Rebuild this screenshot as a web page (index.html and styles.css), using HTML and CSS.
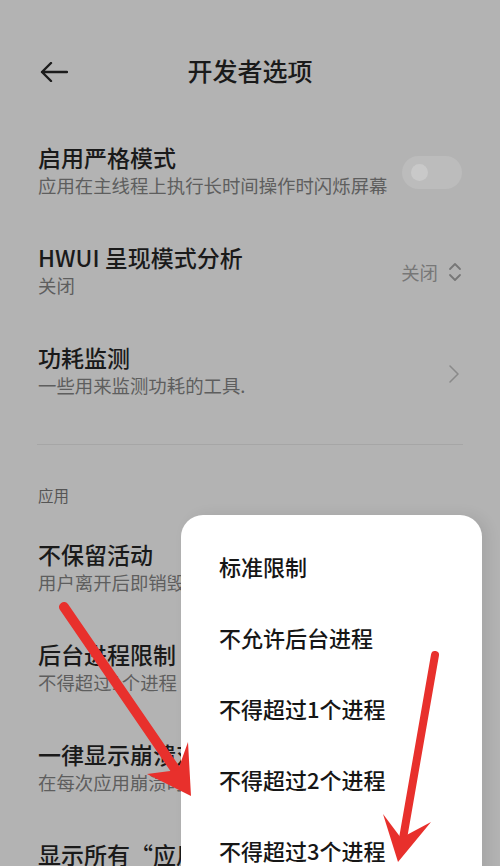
FILE: index.html
```html
<!DOCTYPE html>
<html lang="zh-CN">
  <head>
    <meta charset="UTF-8" />
    <meta name="viewport" content="width=device-width, initial-scale=1.0" />
    <title>开发者选项</title>
    <link rel="stylesheet" href="styles.css">
  </head>
  <body>
    <div class="screen">
      <header class="toolbar">
        <svg class="back" width="28" height="20" viewBox="0 0 28 20">
          <path d="M27 10H2M11 1L2 10l9 9" fill="none" stroke="#1c1c1c" stroke-width="2.4" stroke-linecap="round" stroke-linejoin="round"/>
        </svg>
        <h1>开发者选项</h1>
      </header>

      <div class="list">
        <div class="item">
          <div class="text">
            <div class="title">启用严格模式</div>
            <div class="sub">应用在主线程上执行长时间操作时闪烁屏幕</div>
          </div>
          <div class="switch"><span class="knob"></span></div>
        </div>
        <div class="item">
          <div class="text">
            <div class="title">HWUI 呈现模式分析</div>
            <div class="sub">关闭</div>
          </div>
          <div class="value">
            关闭
            <svg width="14" height="20" viewBox="0 0 14 20">
              <path d="M2 7l5-5 5 5M2 13l5 5 5-5" fill="none" stroke="#777" stroke-width="1.8" stroke-linecap="round" stroke-linejoin="round"/>
            </svg>
          </div>
        </div>
        <div class="item">
          <div class="text">
            <div class="title">功耗监测</div>
            <div class="sub">一些用来监测功耗的工具.</div>
          </div>
          <svg class="chevron" width="12" height="20" viewBox="0 0 12 20">
            <path d="M2 2l8 8-8 8" fill="none" stroke="#8a8a8a" stroke-width="1.6" stroke-linecap="round" stroke-linejoin="round"/>
          </svg>
        </div>

        <div class="divider"></div>
        <div class="section">应用</div>

        <div class="item">
          <div class="text">
            <div class="title">不保留活动</div>
            <div class="sub">用户离开后即销毁每个活动</div>
          </div>
        </div>
        <div class="item">
          <div class="text">
            <div class="title">后台进程限制</div>
            <div class="sub">不得超过1个进程</div>
          </div>
        </div>
        <div class="item">
          <div class="text">
            <div class="title">一律显示崩溃对话框</div>
            <div class="sub">在每次应用崩溃时显示对话框</div>
          </div>
        </div>
        <div class="item">
          <div class="text">
            <div class="title">显示所有“应用无响应”</div>
            <div class="sub">为后台应用显示“应用无响应”对话框</div>
          </div>
        </div>
      </div>

      <div class="menu">
        <div class="option">标准限制</div>
        <div class="option">不允许后台进程</div>
        <div class="option">不得超过1个进程</div>
        <div class="option">不得超过2个进程</div>
        <div class="option">不得超过3个进程</div>
      </div>

      <svg class="marks" width="500" height="866" viewBox="0 0 500 866">
        <g fill="none" stroke="#e8302c" stroke-linecap="round" stroke-linejoin="round">
          <path d="M64 607L184 782" stroke-width="10"/>
          <path d="M435 655L401 850" stroke-width="8"/>
        </g>
        <g fill="#e8302c">
          <path d="M191 796L188 742L178 770L147 774Z"/>
          <path d="M398 862L383 814L401 838L431 822Z"/>
        </g>
      </svg>
    </div>
  </body>
</html>
```

FILE: styles.css
```css
* {
  margin: 0;
  padding: 0;
  box-sizing: border-box;
}
body {
  background-color: #b3b3b3;
  font-family: 'Noto Sans CJK SC', 'Noto Sans', sans-serif;
  color: #1a1a1a;
  overflow: hidden;
}
.screen {
  position: relative;
  width: 500px;
  height: 866px;
  overflow: hidden;
}
.toolbar {
  height: 122px;
  padding: 38px 38px 0;
  position: relative;
}
.toolbar h1 {
  font-size: 25px;
  font-weight: 500;
  line-height: 64px;
  text-align: center;
}
.back {
  position: absolute;
  left: 40px;
  top: 62px;
}
.item {
  height: 100px;
  padding: 0 38px;
  display: flex;
  align-items: center;
  justify-content: space-between;
}
.text {
  white-space: nowrap;
  margin-top: -4px;
}
.title {
  font-size: 23px;
  font-weight: 500;
  line-height: 30px;
}
.sub {
  font-size: 18.4px;
  line-height: 26px;
  color: #5e5e5e;
}
.switch {
  width: 60px;
  height: 33px;
  border-radius: 17px;
  background: #bcbcbc;
  padding: 8px 0 0 9px;
  flex-shrink: 0;
}
.knob {
  display: block;
  width: 17px;
  height: 17px;
  border-radius: 50%;
  background: #c9c9c9;
}
.value {
  display: flex;
  align-items: center;
  gap: 10px;
  font-size: 18.4px;
  color: #777;
  margin-top: 0;
}
.chevron {
  margin-right: 2px;
  margin-top: 4px;
}
.divider {
  height: 1px;
  background: #a6a6a6;
  margin: 22px 37px 0;
}
.section {
  font-size: 15.5px;
  line-height: 30px;
  color: #555;
  padding: 35px 38px 0;
  height: 74px;
}
.menu {
  position: absolute;
  left: 181px;
  top: 515px;
  width: 301px;
  height: 380px;
  background: #fff;
  border-radius: 22px;
  padding: 16px 0 0 38px;
  box-shadow: 6px 0 14px rgba(0, 0, 0, 0.08);
}
.option {
  height: 71px;
  font-size: 22px;
  font-weight: 500;
  line-height: 71px;
  color: #161616;
}
.marks {
  position: absolute;
  left: 0;
  top: 0;
}
```
